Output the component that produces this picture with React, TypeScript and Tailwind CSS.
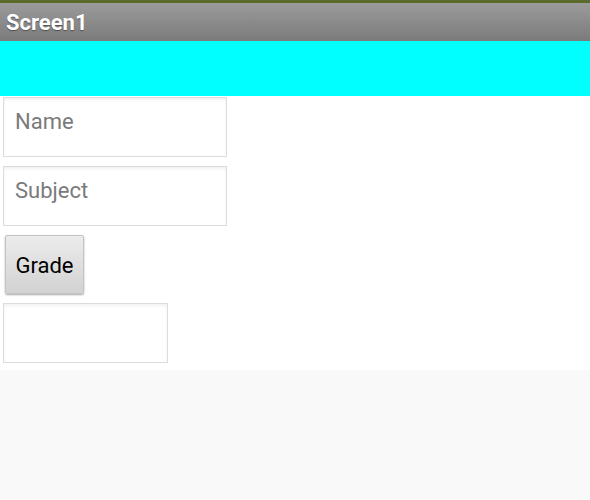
export default function App() {
  const box =
    "border border-[#dcdcdc] bg-white shadow-[inset_0_2px_3px_rgba(0,0,0,0.06)]";
  return (
    <div className="w-[590px] h-[500px] bg-[#f9f9f9] flex flex-col" style={{ fontFamily: "Roboto, 'Noto Sans', sans-serif" }}>
      <div className="h-[3px] bg-[#5a6a2b]" />
      <div className="h-[38px] bg-gradient-to-b from-[#9b9b9b] to-[#7b7b7b] flex items-center pl-[6px] pt-[2px]">
        <span className="text-white font-bold text-[22px] leading-none [text-shadow:0_1px_1px_rgba(0,0,0,0.4)]">Screen1</span>
      </div>
      <div className="h-[55px] bg-[#00ffff]" />
      <div className="h-[274px] bg-white flex flex-col items-start pt-[1px] pl-[3px] gap-[9px]">
        <div className={`${box} w-[224px] h-[60px] pl-[11px] pt-[10px] text-[22px] leading-[28px] text-[#7a7a7a]`}>Name</div>
        <div className={`${box} w-[224px] h-[60px] pl-[11px] pt-[10px] text-[22px] leading-[28px] text-[#7a7a7a]`}>Subject</div>
        <div className="ml-[2px] w-[79px] h-[59px] pt-[2px] rounded-[2px] border border-[#c4c4c4] bg-gradient-to-b from-[#ececec] to-[#d2d2d2] shadow-[0_1px_2px_rgba(0,0,0,0.35)] flex items-center justify-center text-[22px] text-black">Grade</div>
        <div className={`${box} w-[165px] h-[60px]`} />
      </div>
    </div>
  );
}
